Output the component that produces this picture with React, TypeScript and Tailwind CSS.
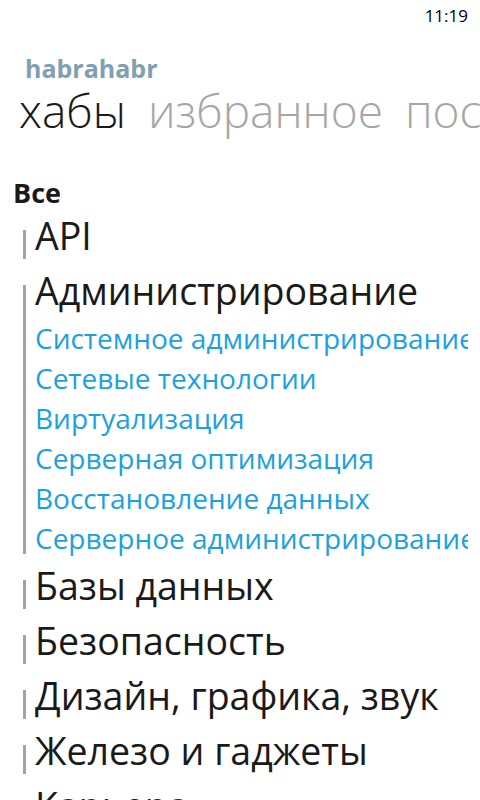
import React from 'react';

type Hub = {
  title: string;
  children?: string[];
};

const hubs: Hub[] = [
  { title: 'API' },
  {
    title: 'Администрирование',
    children: [
      'Системное администрирование',
      'Сетевые технологии',
      'Виртуализация',
      'Серверная оптимизация',
      'Восстановление данных',
      'Серверное администрирование',
    ],
  },
  { title: 'Базы данных' },
  { title: 'Безопасность' },
  { title: 'Дизайн, графика, звук' },
  { title: 'Железо и гаджеты' },
  { title: 'Карьера' },
];

const font = { fontFamily: '"Open Sans", "Noto Sans", sans-serif' };

function HubRow({ hub }: { hub: Hub }) {
  return (
    <div className="flex">
      {/* group marker */}
      <div className="w-[3px] shrink-0 mt-[22px] mb-[4px] bg-[#a3a3a3]" />
      <div className="flex flex-col pl-[9px] min-w-0">
        <div className="h-[55px] text-[37.5px] leading-[55px] text-[#1a1a1a] whitespace-nowrap">
          {hub.title}
        </div>
        {hub.children?.map((c) => (
          <div
            key={c}
            className="h-[40px] text-[28px] leading-[40px] text-[#1ba1e2] whitespace-nowrap"
          >
            {c}
          </div>
        ))}
      </div>
    </div>
  );
}

export default function App() {
  return (
    <div className="w-[480px] h-[800px] bg-white overflow-hidden relative" style={font}>
      {/* status bar */}
      <div className="h-[32px] flex justify-end items-center pr-[12px] text-[17px] text-black">
        11:19
      </div>

      <div className="pl-[25px] pt-[22px] text-[25px] leading-[28px] font-bold text-[#7f9fb3]">
        habrahabr
      </div>

      <div className="flex gap-[22px] pl-[19px] text-[46px] leading-[56px] font-light whitespace-nowrap">
        <span className="text-[#1a1a1a]">хабы</span>
        <span className="text-[#a6a6a6]">избранное</span>
        <span className="text-[#a6a6a6]">посты</span>
      </div>

      <div className="pl-[13px] pt-[40px] text-[27px] leading-[30px] font-bold text-[#1a1a1a]">
        Все
      </div>

      <div className="ml-[23px] w-[445px] overflow-hidden">
        {hubs.map((h) => (
          <HubRow key={h.title} hub={h} />
        ))}
      </div>
    </div>
  );
}
